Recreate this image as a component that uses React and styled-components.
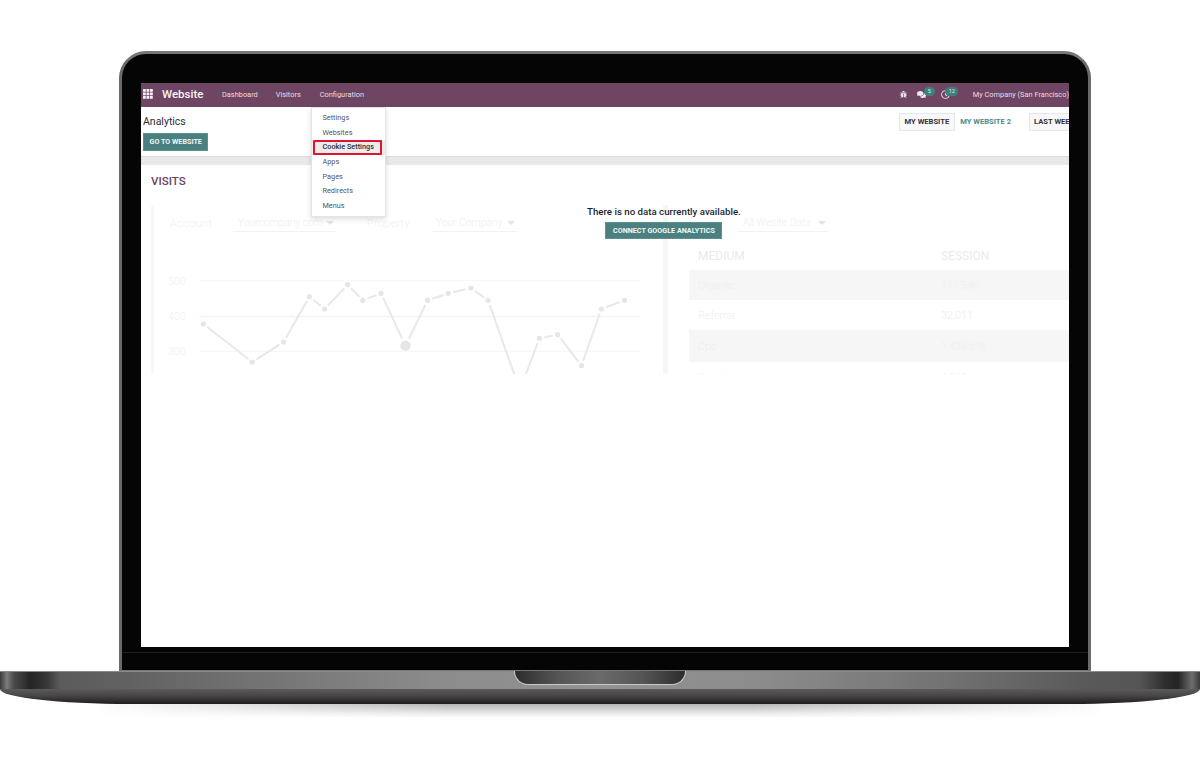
import React from "react";
import styled, { createGlobalStyle } from "styled-components";
import { FaBug, FaComments, FaRegClock } from "react-icons/fa";

const Global = createGlobalStyle`
  html, body { margin: 0; padding: 0; background: #fff; overflow: hidden; }
  body { font-family: Roboto, "Liberation Sans", sans-serif; }
`;

const Page = styled.div`
  width: 1200px;
  height: 766px;
  padding-top: 51px;
  box-sizing: border-box;
  overflow: hidden;
  background: #fff;
`;

const Lid = styled.div`
  width: 972px;
  height: 620px;
  margin-left: 119px;
  box-sizing: border-box;
  padding: 29px 19px 0 19px;
  background: #050505;
  border: 3px solid #6a6a6a;
  border-bottom: 1px solid #777;
  border-top-color: #777;
  border-radius: 27px 27px 0 0;
`;

const Screen = styled.div`
  width: 928px;
  height: 564px;
  background: #fff;
  overflow: hidden;
  position: relative;
  display: flex;
  flex-direction: column;
`;

const ChinLine = styled.div`
  height: 1px;
  margin: 5px -19px 0;
  background: #1c1c1c;
`;

const Navbar = styled.div`
  height: 24px;
  flex: none;
  box-sizing: border-box;
  display: flex;
  align-items: center;
  background: #6f4564;
  color: #fff;
  padding: 0 0 2px 2px;
`;

const AppGrid = styled.svg`
  width: 10px;
  height: 10px;
  fill: #f4eef2;
  flex: none;
`;

const Brand = styled.span`
  font-size: 11.5px;
  font-weight: 500;
  margin-left: 9px;
  width: 60px;
  color: #f8f3f6;
`;

const NavLink = styled.span`
  font-size: 7.4px;
  color: #e8dde5;
  margin-right: ${(p) => p.$gap}px;
  white-space: nowrap;
`;

const NavRight = styled.div`
  margin-left: auto;
  display: flex;
  align-items: center;
  width: 169px;
  flex: none;
  white-space: nowrap;
  color: #f0e8ee;
`;

const IconSlot = styled.span`
  position: relative;
  display: inline-flex;
  align-items: center;
  width: ${(p) => p.$w}px;
  font-size: ${(p) => p.$size}px;
`;

const Badge = styled.span`
  position: absolute;
  left: ${(p) => p.$left}px;
  top: -3px;
  min-width: ${(p) => p.$w}px;
  height: 9px;
  border-radius: 5px;
  background: #3f7f7e;
  color: #dfeeee;
  font-size: 5.5px;
  line-height: 9px;
  text-align: center;
`;

const Company = styled.span`
  font-size: 7.4px;
  color: #e8dde5;
`;

const ControlPanel = styled.div`
  height: 49px;
  flex: none;
  display: flex;
  justify-content: space-between;
  padding: 6px 0 0 2px;
  box-sizing: border-box;
`;

const PanelLeft = styled.div`
  display: flex;
  flex-direction: column;
  align-items: flex-start;
  gap: 4px;
  padding-top: 1px;
`;

const Title = styled.div`
  font-size: 10.5px;
  line-height: 15px;
  color: #2d2d35;
`;

const TealButton = styled.div`
  height: ${(p) => p.$h}px;
  padding: 0 ${(p) => p.$pad}px;
  background: #4a8180;
  border: 1px solid #5d9090;
  box-sizing: border-box;
  color: #f1f6f6;
  font-size: 7.2px;
  font-weight: 700;
  line-height: ${(p) => p.$h - 2}px;
  white-space: nowrap;
`;

const PanelRight = styled.div`
  display: flex;
  align-items: flex-start;
  flex: none;
  width: 170px;
`;

const Filter = styled.div`
  height: 18px;
  box-sizing: border-box;
  line-height: 16px;
  font-size: 7.6px;
  font-weight: 700;
  white-space: nowrap;
  flex: none;
  padding: 0 4.5px;
  color: ${(p) => (p.$active ? "#4d8b8b" : "#33333d")};
  border: 1px solid ${(p) => (p.$active ? "transparent" : "#e6e6ee")};
  background: ${(p) => (p.$active ? "#fff" : "#f8f8fa")};
  margin-right: ${(p) => p.$gap || 0}px;
`;

const Band = styled.div`
  height: 9px;
  flex: none;
  box-sizing: border-box;
  background: #e9e9e9;
  border-top: 1px solid #dcdcdc;
`;

const Sheet = styled.div`
  flex: 1;
  position: relative;
  padding-left: 10px;
`;

const Heading = styled.div`
  height: 40px;
  padding-top: 9px;
  box-sizing: border-box;
  font-size: 11.5px;
  line-height: 14px;
  font-weight: 500;
  color: #6b3f60;
`;

const Preview = styled.div`
  height: 169px;
  width: 940px;
  overflow: hidden;
  display: grid;
  grid-template-columns: 512px 1fr;
  border-left: 3px solid #f8f8fa;
`;

const LeftPane = styled.div`
  display: flex;
  flex-direction: column;
  border-right: 5px solid #f6f6f9;
  width: 514px;
  box-sizing: border-box;
`;

const FilterRow = styled.div`
  height: 33px;
  flex: none;
  box-sizing: border-box;
  display: flex;
  align-items: flex-end;
  padding-left: ${(p) => p.$pad}px;
  padding-bottom: 6px;
`;

const FieldLabel = styled.span`
  font-size: 11.5px;
  font-weight: 300;
  color: #f0f0f0;
  line-height: 18px;
  margin-right: ${(p) => p.$gap}px;
`;

const Select = styled.span`
  display: inline-flex;
  align-items: center;
  justify-content: space-between;
  width: ${(p) => p.$w}px;
  height: 18px;
  box-sizing: border-box;
  padding: 0 2px 0 5px;
  border-bottom: 1px solid #f2f2f2;
  font-size: 10.3px;
  font-weight: 300;
  color: #eeeeee;
  white-space: nowrap;
  margin-right: ${(p) => p.$gap || 0}px;
  &::after {
    content: "";
    border: 4px solid transparent;
    border-top: 4px solid #e4e4e4;
    border-bottom: 0;
  }
`;

const Chart = styled.svg`
  display: block;
  width: 509px;
  height: 136px;
  flex: none;
`;

const RightPane = styled.div`
  padding-left: 21px;
  margin-left: 2px;
`;

const Table = styled.div`
  display: flex;
  flex-direction: column;
`;

const Row = styled.div`
  display: grid;
  grid-template-columns: 243px 1fr;
  padding-left: 9px;
  align-items: center;
  height: ${(p) => p.$h}px;
  background: ${(p) => (p.$shade ? "#f6f6f6" : "#fff")};
  font-size: 10.8px;
  font-weight: 300;
  color: #eeeeee;
`;

const HeaderRow = styled(Row)`
  font-size: 12px;
  font-weight: 400;
  color: #ebebeb;
  align-items: flex-start;
  padding-top: 11px;
  box-sizing: border-box;
`;

const Overlay = styled.div`
  position: absolute;
  left: 446px;
  top: 40px;
  display: flex;
  flex-direction: column;
  align-items: center;
  gap: 3px;
`;

const EmptyText = styled.div`
  font-size: 9.7px;
  line-height: 14px;
  font-weight: 500;
  color: #1f1f33;
  white-space: nowrap;
`;

const Menu = styled.div`
  position: absolute;
  left: 170px;
  top: 24px;
  width: 75px;
  height: 110px;
  box-sizing: border-box;
  padding-top: 3px;
  background: #fff;
  border: 1px solid #e4e4e8;
  box-shadow: 0 2px 5px rgba(0, 0, 0, 0.14);
`;

const MenuItem = styled.div`
  position: relative;
  height: 14.7px;
  line-height: 14.7px;
  padding-left: 10.5px;
  font-size: 7.3px;
  color: ${(p) => (p.$on ? "#2f2f3a" : "#55555e")};
  font-weight: ${(p) => (p.$on ? 500 : 400)};
  background: ${(p) => (p.$on ? "#ececec" : "transparent")};
`;

const RedBox = styled.span`
  position: absolute;
  left: 1px;
  top: 0;
  width: 69px;
  height: 15px;
  box-sizing: border-box;
  border: 2px solid #e0142f;
  border-radius: 1px;
`;

const Base = styled.div`
  position: relative;
  width: 1200px;
  height: 33px;
`;

const BaseTop = styled.div`
  height: 18px;
  box-sizing: border-box;
  border-top: 1px solid #8a8a8a;
  background: linear-gradient(
    90deg,
    #3a3a3a 0,
    #7c7c7c 7px,
    #4a4a4a 14px,
    #242424 30px,
    #3a3a3a 48px,
    #5b5b5b 60px,
    #626262 130px,
    #737373 260px,
    #8c8c8c 440px,
    #929292 600px,
    #8c8c8c 760px,
    #737373 940px,
    #5a5a5a 1080px,
    #555 1140px,
    #2e2e2e 1165px,
    #242424 1178px,
    #6e6e6e 1192px,
    #3a3a3a 1200px
  );
`;

const BaseBottom = styled.div`
  height: 15px;
  background: linear-gradient(180deg, #5c5a5a 0, #474545 45%, #1e1c1c 100%);
  border-radius: 0 0 130px 130px / 0 0 15px 15px;
`;

const Notch = styled.div`
  position: absolute;
  left: 514px;
  top: 0;
  width: 172px;
  height: 14px;
  box-sizing: border-box;
  border-radius: 0 0 14px 14px;
  border: 1px solid #c9c9c9;
  border-top: 0;
  background: linear-gradient(
    90deg,
    #2c2c2c,
    #555 25%,
    #6a6a6a 50%,
    #555 75%,
    #2c2c2c
  );
`;

const Shadow = styled.div`
  height: 14px;
  margin: 0 90px;
  background: linear-gradient(180deg, #b4b4b4 0, #e8e8e8 65%, #fff 100%);
  -webkit-mask-image: linear-gradient(90deg, transparent, #000 35%, #000 65%, transparent);
  mask-image: linear-gradient(90deg, transparent, #000 35%, #000 65%, transparent);
`;

const zx = (v) => 140 + v / 2.904;
const zy = (v) => 200 + v / 3;
const pts = [
  [184, 372], [326, 486], [417, 426], [492, 290], [536, 327], [603, 254],
  [647, 301], [700, 280], [771, 437], [835, 301], [895, 280], [961, 264],
  [1011, 301], [1103, 570], [1160, 415], [1213, 404], [1282, 497], [1340, 327], [1407, 301],
].map(([x, y]) => [zx(x), zy(y)]);

const segments = pts.slice(1).map((p, i) => {
  const a = pts[i];
  const dx = p[0] - a[0];
  const dy = p[1] - a[1];
  const len = Math.hypot(dx, dy);
  const g = 5;
  const g2 = i === 7 ? 8 : g;
  const g1 = i === 8 ? 8 : g;
  return {
    x1: a[0] + (dx / len) * g1,
    y1: a[1] + (dy / len) * g1,
    x2: p[0] - (dx / len) * g2,
    y2: p[1] - (dy / len) * g2,
  };
});

const navItems = [
  ["Dashboard", 18],
  ["Visitors", 19],
  ["Configuration", 0],
];
const menuItems = ["Settings", "Websites", "Cookie Settings", "Apps", "Pages", "Redirects", "Menus"];
const rows = [
  ["Organic", "117,546", 30, true],
  ["Referral", "32,011", 30, false],
  ["Cpc", "1,435,676", 32, true],
  ["Email", "4,902", 30, false],
];

export default function App() {
  return (
    <Page>
      <Global />
      <Lid>
        <Screen>
          <Navbar>
            <AppGrid viewBox="0 0 10 10">
              {[0, 3.5, 7].flatMap((y) =>
                [0, 3.5, 7].map((x) => <rect key={`${x}-${y}`} x={x} y={y} width="2.8" height="2.8" />)
              )}
            </AppGrid>
            <Brand>Website</Brand>
            {navItems.map(([t, g]) => (
              <NavLink key={t} $gap={g}>{t}</NavLink>
            ))}
            <NavRight>
              <IconSlot $w={17} $size={7}><FaBug /></IconSlot>
              <IconSlot $w={25} $size={9}>
                <FaComments />
                <Badge $left={7} $w={11}>5</Badge>
              </IconSlot>
              <IconSlot $w={32} $size={9}>
                <FaRegClock />
                <Badge $left={4} $w={13}>12</Badge>
              </IconSlot>
              <Company>My Company (San Francisco)</Company>
            </NavRight>
          </Navbar>
          <ControlPanel>
            <PanelLeft>
              <Title>Analytics</Title>
              <TealButton $pad={5.5} $h={18}>GO TO WEBSITE</TealButton>
            </PanelLeft>
            <PanelRight>
              <Filter>MY WEBSITE</Filter>
              <Filter $active $gap={12}>MY WEBSITE 2</Filter>
              <Filter>LAST WEEK</Filter>
            </PanelRight>
          </ControlPanel>
          <Band />
          <Sheet>
            <Heading>VISITS</Heading>
            <Preview>
              <LeftPane>
                <FilterRow $pad={16}>
                  <FieldLabel $gap={21}>Account</FieldLabel>
                  <Select $w={103} $gap={31}>Yourcompany.com</Select>
                  <FieldLabel $gap={21}>Property</FieldLabel>
                  <Select $w={86}>Your Company</Select>
                </FilterRow>
                <Chart viewBox="154 238 509 136">
                  <line x1="199" x2="640" y1="280.7" y2="280.7" stroke="#f6f6f6" />
                  <line x1="199" x2="640" y1="316.3" y2="316.3" stroke="#fbe9ea" />
                  <line x1="199" x2="640" y1="351.3" y2="351.3" stroke="#f5f5f5" />
                  {[["500", 285], ["400", 320], ["300", 355]].map(([t, y]) => (
                    <text key={t} x="168" y={y} fontSize="10.5" fontWeight="300" fill="#f0f0f0" fontFamily="Roboto, sans-serif">{t}</text>
                  ))}
                  {segments.map((s, i) => (
                    <line key={i} {...s} stroke="#e8e8e8" strokeWidth="2" />
                  ))}
                  {pts.map(([x, y], i) => (
                    <circle key={i} cx={x} cy={y} r={i === 8 ? 5.2 : 2.6} fill="#e6e6e6" />
                  ))}
                </Chart>
              </LeftPane>
              <RightPane>
                <FilterRow $pad={49}>
                  <Select $w={90}>All Wesite Data</Select>
                </FilterRow>
                <Table>
                  <HeaderRow $h={32}>
                    <span>MEDIUM</span>
                    <span>SESSION</span>
                  </HeaderRow>
                  {rows.map(([a, b, h, s]) => (
                    <Row key={a} $h={h} $shade={s}>
                      <span>{a}</span>
                      <span>{b}</span>
                    </Row>
                  ))}
                </Table>
              </RightPane>
            </Preview>
            <Overlay>
              <EmptyText>There is no data currently available.</EmptyText>
              <TealButton $pad={6.5} $h={17}>CONNECT GOOGLE ANALYTICS</TealButton>
            </Overlay>
          </Sheet>
          <Menu>
            {menuItems.map((m) => (
              <MenuItem key={m} $on={m === "Cookie Settings"}>
                {m}
                {m === "Cookie Settings" && <RedBox />}
              </MenuItem>
            ))}
          </Menu>
        </Screen>
        <ChinLine />
      </Lid>
      <Base>
        <BaseTop />
        <BaseBottom />
        <Notch />
      </Base>
      <Shadow />
    </Page>
  );
}
